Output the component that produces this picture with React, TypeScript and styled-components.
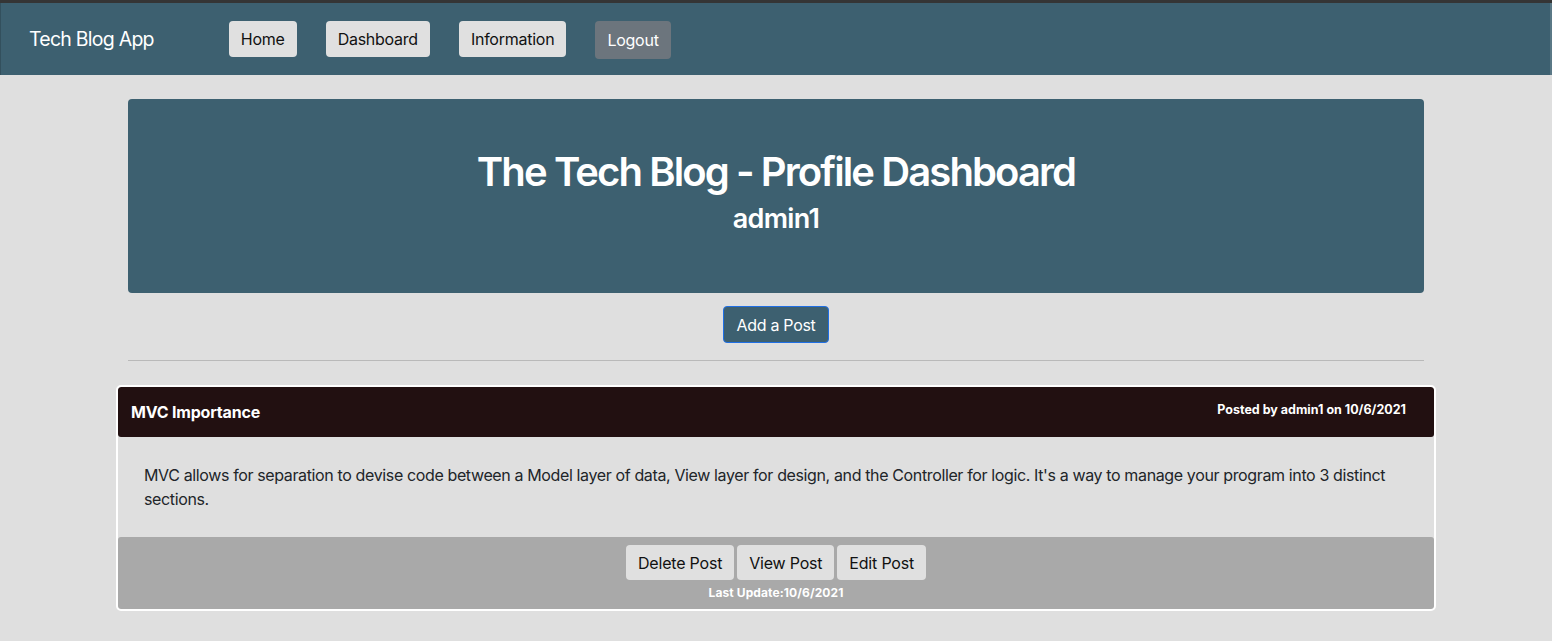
import React from "react";
import styled, { createGlobalStyle } from "styled-components";

const GlobalStyle = createGlobalStyle`
  html, body { margin: 0; padding: 0; }
  body {
    background: #dfdfdf;
    font-family: Inter, "Noto Sans", "Liberation Sans", sans-serif;
    color: #212529;
    -webkit-font-smoothing: antialiased;
  }
  * { box-sizing: border-box; }
`;

const Page = styled.div`
  min-height: 641px;
  border-top: 3px solid #353535;
`;

const NavBar = styled.nav`
  height: 72px;
  background: #3d6070;
  display: flex;
  align-items: center;
  padding-left: 28px;
  border-left: 1px solid #33505d;
  border-right: 2px solid #5a7886;
`;

const Brand = styled.a`
  font-size: 19.5px;
  color: #fff;
  margin-right: 75px;
  letter-spacing: -0.75px;
`;

const NavLinks = styled.div`
  display: flex;
  gap: 29px;
  align-items: center;
  margin-top: -1px;
`;

const NavButton = styled.button<{ $secondary?: boolean }>`
  font-family: inherit;
  font-size: 16px;
  height: ${(p) => (p.$secondary ? "38px" : "36px")};
  margin-top: ${(p) => (p.$secondary ? "2px" : "0")};
  padding: 0 12px;
  border: none;
  border-radius: 4px;
  background: ${(p) => (p.$secondary ? "#6c757d" : "#e0e0e0")};
  color: ${(p) => (p.$secondary ? "#fff" : "#111")};
  letter-spacing: -0.25px;
`;

const Main = styled.main`
  width: 1296px;
  margin: 0 auto;
  padding-top: 24px;
  display: flex;
  flex-direction: column;
  align-items: center;
`;

const Hero = styled.section`
  width: 100%;
  height: 194px;
  background: #3d6070;
  border-radius: 4px;
  color: #fff;
  display: flex;
  flex-direction: column;
  align-items: center;
  padding-top: 49px;
`;

const HeroTitle = styled.h1`
  margin: 0;
  font-size: 40px;
  font-weight: 600;
  line-height: 48px;
  letter-spacing: -1.9px;
`;

const HeroSub = styled.h3`
  margin: 6px 0 0;
  font-size: 27px;
  font-weight: 600;
  line-height: 34px;
  letter-spacing: -0.7px;
`;

const AddButton = styled.button`
  margin-top: 13px;
  height: 37px;
  padding: 0 12px;
  font-family: inherit;
  font-size: 16px;
  color: #fff;
  background: #3d6070;
  border: 1px solid #1f6fe5;
  border-radius: 4px;
  letter-spacing: -0.3px;
`;

const Divider = styled.hr`
  width: 100%;
  margin: 17px 0 0;
  border: none;
  border-top: 1px solid #b9b9b9;
`;

const Card = styled.article`
  width: 1320px;
  margin-top: 24px;
  border: 2px solid #fff;
  border-radius: 5px;
  overflow: hidden;
  background: #dfdfdf;
`;

const CardHeader = styled.header`
  height: 50px;
  background: #221011;
  color: #fff;
  display: flex;
  justify-content: space-between;
  align-items: center;
  padding: 0 28px 0 13px;
  border-radius: 3px;
`;

const CardTitle = styled.h5`
  margin: 0;
  font-size: 16px;
  font-weight: 700;
  letter-spacing: -0.2px;
`;

const CardMeta = styled.span`
  font-size: 12.5px;
  font-weight: 700;
  margin-top: -5px;
`;

const CardBody = styled.div`
  height: 100px;
  padding: 26px 26px 0;
`;

const CardText = styled.p`
  margin: 0;
  font-size: 16px;
  line-height: 24px;
  color: #212529;
  letter-spacing: -0.37px;
`;

const CardFooter = styled.footer`
  height: 72px;
  background: #a9a9a9;
  border-radius: 3px;
  display: flex;
  flex-direction: column;
  align-items: center;
  padding-top: 8px;
`;

const Actions = styled.div`
  display: flex;
  gap: 3px;
`;

const ActionButton = styled.button`
  height: 35px;
  padding: 0 12px;
  font-family: inherit;
  font-size: 16px;
  color: #111;
  background: #e0e0e0;
  border: none;
  border-radius: 4px;
  letter-spacing: -0.2px;
`;

const Updated = styled.small`
  margin-top: 6px;
  font-size: 12px;
  font-weight: 700;
  color: #fff;
  line-height: 14px;
  letter-spacing: 0.1px;
`;

export default function App() {
  return (
    <Page>
      <GlobalStyle />
      <NavBar>
        <Brand>Tech Blog App</Brand>
        <NavLinks>
          <NavButton>Home</NavButton>
          <NavButton>Dashboard</NavButton>
          <NavButton>Information</NavButton>
          <NavButton $secondary>Logout</NavButton>
        </NavLinks>
      </NavBar>
      <Main>
        <Hero>
          <HeroTitle>The Tech Blog - Profile Dashboard</HeroTitle>
          <HeroSub>admin1</HeroSub>
        </Hero>
        <AddButton>Add a Post</AddButton>
        <Divider />
        <Card>
          <CardHeader>
            <CardTitle>MVC Importance</CardTitle>
            <CardMeta>Posted by admin1 on 10/6/2021</CardMeta>
          </CardHeader>
          <CardBody>
            <CardText>
              MVC allows for separation to devise code between a Model layer of data, View layer for design, and the Controller for logic. It's a way to manage your program into 3 distinct sections.
            </CardText>
          </CardBody>
          <CardFooter>
            <Actions>
              <ActionButton>Delete Post</ActionButton>
              <ActionButton>View Post</ActionButton>
              <ActionButton>Edit Post</ActionButton>
            </Actions>
            <Updated>Last Update:10/6/2021</Updated>
          </CardFooter>
        </Card>
      </Main>
    </Page>
  );
}
